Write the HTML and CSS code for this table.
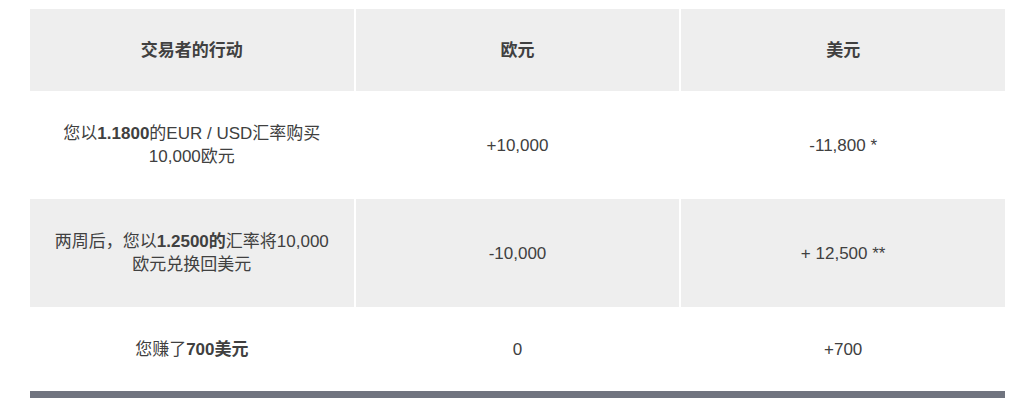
FILE: index.html
```html
<!DOCTYPE html>
<html lang="zh">
<head>
<meta charset="utf-8">
<title>交易者的行动</title>
<link rel="stylesheet" href="styles.css">
</head>
<body>
<div class="trade-table">
  <div class="row head">
    <div class="cell"><span>交易者的行动</span></div>
    <div class="cell"><span>欧元</span></div>
    <div class="cell"><span>美元</span></div>
  </div>
  <div class="row body">
    <div class="cell"><span>您以<b>1.1800</b>的EUR / USD汇率购买10,000欧元</span></div>
    <div class="cell"><span>+10,000</span></div>
    <div class="cell"><span>-11,800 *</span></div>
  </div>
  <div class="row body alt">
    <div class="cell"><span>两周后，您以<b>1.2500的</b>汇率将10,000欧元兑换回美元</span></div>
    <div class="cell"><span>-10,000</span></div>
    <div class="cell"><span>+ 12,500 **</span></div>
  </div>
  <div class="row total">
    <div class="cell"><span>您赚了<b>700美元</b></span></div>
    <div class="cell"><span>0</span></div>
    <div class="cell"><span>+700</span></div>
  </div>
</div>
</body>
</html>
```
FILE: styles.css
```css
html, body {
  margin: 0;
  padding: 0;
  background: #ffffff;
}

body {
  font-family: "Liberation Sans", Arial, "Noto Sans CJK SC", sans-serif;
  font-size: 17px;
  line-height: 23px;
  color: #404040;
}

.trade-table {
  width: 975px;
  margin: 9px 0 0 30px;
  border-bottom: 7px solid #70747f;
}

.row {
  display: grid;
  grid-template-columns: repeat(3, 1fr);
  column-gap: 2px;
}

.cell {
  display: flex;
  align-items: center;
  justify-content: center;
  text-align: center;
  padding: 0 18px;
}

.head .cell {
  background: #eeeeee;
  font-weight: bold;
  height: 82px;
}

.body .cell {
  height: 108px;
}

.alt .cell {
  background: #eeeeee;
}

.total .cell {
  height: 84px;
}

b {
  font-weight: bold;
}
```
